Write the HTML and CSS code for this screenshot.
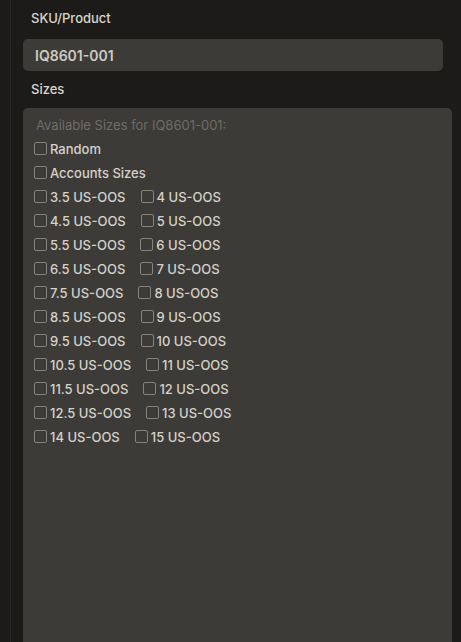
FILE: index.html
```html
<!DOCTYPE html>
<html>
<head>
<meta charset="utf-8">
<link rel="stylesheet" href="styles.css">
</head>
<body>
<div class="page">
  <div class="field-label">SKU/Product</div>
  <div class="input">IQ8601-001</div>
  <div class="field-label sizes-label">Sizes</div>
  <div class="panel">
    <div class="hint">Available Sizes for IQ8601-001:</div>
    <div class="row"><label class="opt"><input type="checkbox"><span>Random</span></label></div>
    <div class="row"><label class="opt"><input type="checkbox"><span>Accounts Sizes</span></label></div>
    <div class="row"><label class="opt"><input type="checkbox"><span>3.5 US-OOS</span></label><label class="opt"><input type="checkbox"><span>4 US-OOS</span></label></div>
    <div class="row"><label class="opt"><input type="checkbox"><span>4.5 US-OOS</span></label><label class="opt"><input type="checkbox"><span>5 US-OOS</span></label></div>
    <div class="row"><label class="opt"><input type="checkbox"><span>5.5 US-OOS</span></label><label class="opt"><input type="checkbox"><span>6 US-OOS</span></label></div>
    <div class="row"><label class="opt"><input type="checkbox"><span>6.5 US-OOS</span></label><label class="opt"><input type="checkbox"><span>7 US-OOS</span></label></div>
    <div class="row"><label class="opt"><input type="checkbox"><span>7.5 US-OOS</span></label><label class="opt"><input type="checkbox"><span>8 US-OOS</span></label></div>
    <div class="row"><label class="opt"><input type="checkbox"><span>8.5 US-OOS</span></label><label class="opt"><input type="checkbox"><span>9 US-OOS</span></label></div>
    <div class="row"><label class="opt"><input type="checkbox"><span>9.5 US-OOS</span></label><label class="opt"><input type="checkbox"><span>10 US-OOS</span></label></div>
    <div class="row"><label class="opt"><input type="checkbox"><span>10.5 US-OOS</span></label><label class="opt"><input type="checkbox"><span>11 US-OOS</span></label></div>
    <div class="row"><label class="opt"><input type="checkbox"><span>11.5 US-OOS</span></label><label class="opt"><input type="checkbox"><span>12 US-OOS</span></label></div>
    <div class="row"><label class="opt"><input type="checkbox"><span>12.5 US-OOS</span></label><label class="opt"><input type="checkbox"><span>13 US-OOS</span></label></div>
    <div class="row"><label class="opt"><input type="checkbox"><span>14 US-OOS</span></label><label class="opt"><input type="checkbox"><span>15 US-OOS</span></label></div>
  </div>
</div>
</body>
</html>
```

FILE: styles.css
```css
html, body {
  margin: 0;
  padding: 0;
  background: #1c1b19;
  height: 100%;
  overflow: hidden;
}
body {
  font-family: Inter, "Noto Sans", sans-serif;
  color: #d8d4cc;
}
.page {
  margin-left: 10px;
  border-left: 1px solid #282725;
  padding: 10px 9px 0 12px;
  height: 100vh;
  box-sizing: border-box;
  display: flex;
  flex-direction: column;
}
.field-label {
  font-size: 13px;
  font-weight: 500;
  line-height: 16px;
  padding-left: 8px;
  color: #dad6ce;
}
.input {
  margin-top: 13px;
  margin-right: 9px;
  height: 32px;
  flex: none;
  box-sizing: border-box;
  background: #3c3b37;
  border-radius: 5px;
  padding-left: 12px;
  display: flex;
  align-items: center;
  font-size: 14px;
  font-weight: 600;
  color: #cfcbc3;
}
.sizes-label {
  margin-top: 10px;
}
.panel {
  margin-top: 11px;
  flex: 1;
  background: #3c3b37;
  border-radius: 5px 5px 0 0;
  padding: 5px 0 0 11px;
}
.hint {
  height: 24px;
  line-height: 24px;
  font-size: 13px;
  padding-left: 2px;
  color: #6e6c67;
}
.row {
  display: flex;
  align-items: center;
  height: 24px;
  gap: 15px;
}
.opt {
  display: flex;
  align-items: center;
  gap: 3px;
  font-size: 13px;
  font-weight: 500;
  color: #d6d2ca;
}
.opt input {
  appearance: none;
  -webkit-appearance: none;
  margin: 0;
  width: 13px;
  height: 13px;
  box-sizing: border-box;
  border: 1px solid #86837c;
  border-radius: 2px;
  background: transparent;
  position: relative;
  top: -1px;
}
```
